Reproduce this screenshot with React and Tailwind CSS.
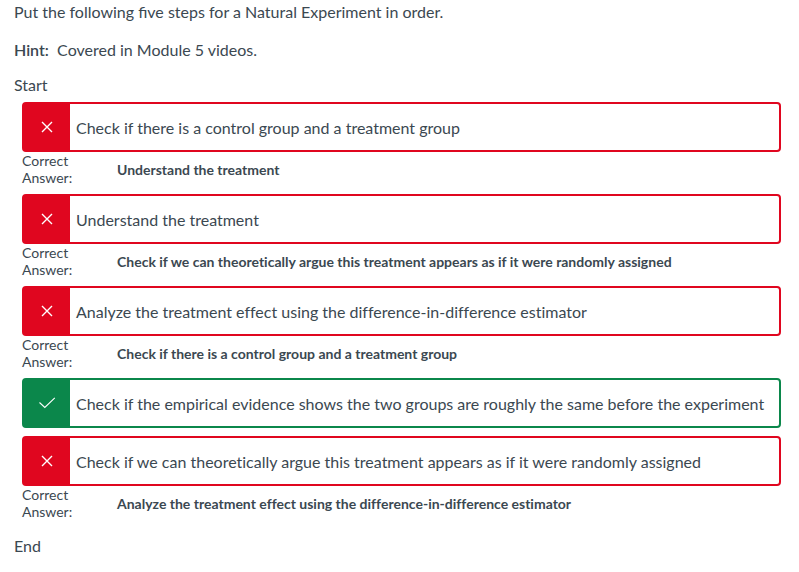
import React from 'react';

const steps = [
  { text: 'Check if there is a control group and a treatment group', answer: 'Understand the treatment' },
  { text: 'Understand the treatment', answer: 'Check if we can theoretically argue this treatment appears as if it were randomly assigned' },
  { text: 'Analyze the treatment effect using the difference-in-difference estimator', answer: 'Check if there is a control group and a treatment group' },
  { text: 'Check if the empirical evidence shows the two groups are roughly the same before the experiment', correct: true },
  { text: 'Check if we can theoretically argue this treatment appears as if it were randomly assigned', answer: 'Analyze the treatment effect using the difference-in-difference estimator' },
];

function Mark({ correct }) {
  return (
    <svg
      viewBox="0 0 18 18"
      className="h-[18px] w-[18px]"
      fill="none"
      stroke="white"
      strokeWidth={correct ? '1.1' : '1.4'}
      role="img"
      aria-label={correct ? 'Correct' : 'Incorrect'}
    >
      <path d={correct ? 'M1.5 8.5 L6.8 13.5 L16.8 3.8' : 'M4 4 L14 14 M14 4 L4 14'} />
    </svg>
  );
}

function Step({ text, answer, correct }) {
  return (
    <li>
      <div className={`flex h-[50px] rounded-sm border-2 ${correct ? 'border-[#0b874b]' : 'border-[#e0061f]'}`}>
        <div className={`flex w-[46px] shrink-0 items-center justify-center ${correct ? 'bg-[#0b874b]' : 'bg-[#e0061f]'}`}>
          <Mark correct={correct} />
        </div>
        <p className="flex items-center pt-[2px] pl-[6px]">{text}</p>
      </div>
      {answer ? (
        <div className="flex h-[42px] items-center pb-2 text-sm leading-[17px]">
          <span className="w-[95px] shrink-0 pr-10">Correct Answer:</span>
          <strong className="font-bold">{answer}</strong>
        </div>
      ) : (
        <div className="h-2" />
      )}
    </li>
  );
}

export default function App() {
  return (
    <main className="px-[14px] font-['Lato',sans-serif] text-base leading-6 text-[#3b4851]">
      <p>Put the following five steps for a Natural Experiment in order.</p>
      <p className="mt-[14px]"><strong className="font-semibold">Hint:</strong>&nbsp; Covered in Module 5 videos.</p>
      <p className="mt-[11px]">Start</p>
      <ol className="mt-[5px] mr-1 ml-2 [font-variant-ligatures:no-common-ligatures]">
        {steps.map((step) => <Step key={step.text} {...step} />)}
      </ol>
      <p className="mt-[6px]">End</p>
    </main>
  );
}
